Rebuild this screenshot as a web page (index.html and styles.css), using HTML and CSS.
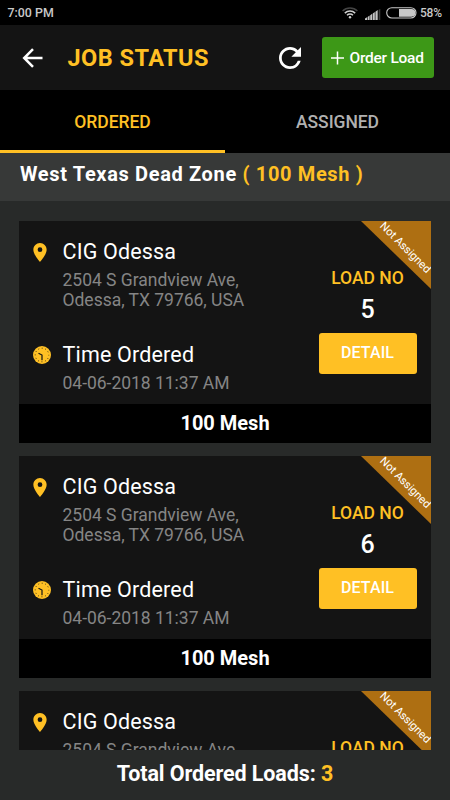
FILE: index.html
```html
<!DOCTYPE html>
<html lang="en">
<head>
<meta charset="utf-8">
<title>Job Status</title>
<link rel="stylesheet" href="styles.css">
</head>
<body>
<svg class="defs" width="0" height="0" aria-hidden="true">
  <symbol id="pin" viewBox="5 2 14 20"><path fill-rule="evenodd" d="M12 2C8.13 2 5 5.13 5 9c0 5.25 7 13 7 13s7-7.75 7-13c0-3.87-3.13-7-7-7zm0 9.5a2.5 2.5 0 1 1 0-5 2.5 2.5 0 0 1 0 5z"/></symbol>
  <symbol id="clock" viewBox="0 0 18 18">
    <circle cx="9" cy="9" r="9"/>
    <circle cx="9" cy="9" r="6.8" fill="none" stroke="#141414" stroke-width=".9" stroke-dasharray=".9 2.66" stroke-dashoffset=".45"/>
    <path d="M5.500 7.200 9 9v5.200" fill="none" stroke="#141414" stroke-width="1.200"/>
  </symbol>
</svg>
<div class="app">
  <div class="statusbar">
    <span class="time">7:00 PM</span>
    <svg class="wifi" width="16" height="12" viewBox="0 0 16 12" fill="none" stroke="#d0d0d0" stroke-width="1.5"><path d="M.6 4a10.6 10.6 0 0 1 14.8 0" stroke="#444"/><path d="M2.8 6.1a7.5 7.5 0 0 1 10.4 0M5 8.3a4.3 4.3 0 0 1 6 0"/><circle cx="8" cy="10.3" r="1.2" fill="#d0d0d0" stroke="none"/></svg>
    <svg class="signal" width="16" height="11" viewBox="0 0 16 11" fill="#c4c4c4"><path d="M0 11V9.500L2 8.300V11zM2.600 11V8L4.600 6.600V11zM5.200 11V6.200L7.200 4.800V11zM7.800 11V4.500L9.800 3.100V11zM10.400 11V2.700L12.700 1V11z"/><path d="M13.600 11V.7L15.300 0V11z" fill="#3b3b3b"/></svg>
    <svg class="battery" width="31" height="12" viewBox="0 0 31 12"><rect x=".7" y=".7" width="29.300" height="10.300" rx="5.150" fill="none" stroke="#c8c8c8" stroke-width="1.100"/><path d="M13 2h12.500a3.800 3.800 0 0 1 0 7.700H13z" fill="#c8c8c8"/></svg>
    <span class="percent">58%</span>
  </div>
  <header class="header">
    <svg class="back" width="21" height="20" viewBox="0 0 21 20" fill="none" stroke="#fff" stroke-width="2.500"><path d="M20.500 10H2.500M11 1.200 2.200 10l8.800 8.800"/></svg>
    <h1 class="title">JOB STATUS</h1>
    <svg class="refresh" width="22" height="22" viewBox="4 4 16 16" fill="#fff"><path d="M17.650 6.350A7.958 7.958 0 0 0 12 4c-4.420 0-7.990 3.580-7.990 8s3.570 8 7.990 8c3.730 0 6.840-2.550 7.730-6h-2.080A5.990 5.990 0 0 1 12 18c-3.310 0-6-2.690-6-6s2.690-6 6-6c1.660 0 3.140.69 4.220 1.780L13 11h7V4l-2.350 2.350z"/></svg>
    <button class="order"><svg width="13" height="14" viewBox="0 0 13 14" stroke="#fff" stroke-width="1.500"><path d="M0 7h13M6.500.5v13"/></svg><span>Order Load</span></button>
  </header>
  <nav class="tabs"><div class="tab active"><span>ORDERED</span></div><div class="tab"><span>ASSIGNED</span></div></nav>
  <div class="zone"><span>West Texas Dead Zone <b>( 100 Mesh )</b></span></div>
  <main class="list">
    <section class="card">
      <div class="body">
        <div class="info">
          <svg class="pin"><use href="#pin"/></svg><div class="name">CIG Odessa</div>
          <div class="address">2504 S Grandview Ave,<br>Odessa, TX 79766, USA</div>
          <svg class="clock"><use href="#clock"/></svg><div class="when">Time Ordered</div>
          <div class="date">04-06-2018 11:37 AM</div>
        </div>
        <div class="load"><div class="label">LOAD NO</div><div class="number">5</div><button class="detail">DETAIL</button></div>
        <div class="ribbon"><span>Not Assigned</span></div>
      </div>
      <div class="mesh">100 Mesh</div>
    </section>
    <section class="card">
      <div class="body">
        <div class="info">
          <svg class="pin"><use href="#pin"/></svg><div class="name">CIG Odessa</div>
          <div class="address">2504 S Grandview Ave,<br>Odessa, TX 79766, USA</div>
          <svg class="clock"><use href="#clock"/></svg><div class="when">Time Ordered</div>
          <div class="date">04-06-2018 11:37 AM</div>
        </div>
        <div class="load"><div class="label">LOAD NO</div><div class="number">6</div><button class="detail">DETAIL</button></div>
        <div class="ribbon"><span>Not Assigned</span></div>
      </div>
      <div class="mesh">100 Mesh</div>
    </section>
    <section class="card last">
      <div class="body">
        <div class="info">
          <svg class="pin"><use href="#pin"/></svg><div class="name">CIG Odessa</div>
          <div class="address">2504 S Grandview Ave,</div>
        </div>
        <div class="load"><div class="label">LOAD NO</div></div>
        <div class="ribbon"><span>Not Assigned</span></div>
      </div>
    </section>
  </main>
  <footer class="total"><span>Total Ordered Loads: <b>3</b></span></footer>
</div>
</body>
</html>
```
FILE: styles.css
```css
* { box-sizing: border-box; }
body { margin: 0; background: #282a29; font-family: Roboto, sans-serif; color: #fff; }
svg { display: block; flex: none; }
.defs { position: absolute; }
button { border: 0; padding: 0; margin: 0; font: inherit; color: #fff; white-space: nowrap; }
.app { display: flex; flex-direction: column; width: 450px; height: 800px; overflow: hidden; white-space: nowrap; }

.statusbar { display: flex; align-items: center; height: 25px; background: #000; padding: 0 7px 0 7.5px; font-size: 12.4px; font-weight: 500; color: #c9c9c9; }
.time { flex: 1; }
.signal { margin: 3px 5px 0 7px; }
.battery { margin-right: 3px; }
.percent { width: 23px; font-size: 12px; letter-spacing: -.2px; }

.header { display: flex; align-items: center; height: 65px; background: #141414; padding: 0 16px 0 22px; }
.title { flex: 1; margin: 0 0 0 24.5px; font-size: 23.5px; line-height: 28px; font-weight: 700; letter-spacing: .45px; color: #ffc024; }
.refresh { margin-right: 21px; }
.order { display: flex; align-items: center; width: 112px; height: 41px; padding-left: 8.5px; gap: 6px; border-radius: 3px; background: #3d9817; font-size: 15.5px; font-weight: 500; letter-spacing: -.25px; }

.tabs { display: flex; height: 63px; background: #000; }
.tab { flex: 1; display: flex; align-items: center; justify-content: center; padding-top: 3px; border-bottom: 3px solid transparent; font-size: 17.5px; font-weight: 500; letter-spacing: -.05px; color: #b0b0b0; }
.tab.active { color: #ffc024; border-color: #ffc024; }

.zone { height: 48px; padding-left: 20px; background: #373938; font-size: 20px; line-height: 43px; font-weight: 700; letter-spacing: .65px; }
.zone b, .total b { color: #ffc024; font-weight: inherit; }

.list { display: flex; flex-direction: column; gap: 13px; height: 549px; padding: 20px 19px 0; overflow: hidden; }
.card { flex: none; width: 412px; }
.body { position: relative; display: flex; height: 183px; background: #141414; overflow: hidden; }
.info { display: grid; grid-template-columns: 29.5px 242.5px; grid-template-rows: 25px 40px auto auto; align-content: start; padding: 18px 0 0 14px; }
.pin { width: 14px; height: 19px; margin-top: 4px; fill: #ffc024; }
.clock { width: 18px; height: 18px; fill: #ffc024; }
.name, .when { font-size: 21.5px; line-height: 25px; letter-spacing: .17px; }
.address, .date { grid-column: 2; font-size: 17.5px; color: #858585; letter-spacing: -.02px; }
.address { line-height: 20px; margin-top: 6px; }
.info .when { margin-top: 38px; }
.info .clock { margin-top: 42px; }
.date { line-height: 24px; margin-top: 4px; }
.load { display: flex; flex-direction: column; align-items: center; width: 98px; margin-left: 13.5px; padding-top: 46px; }
.label { font-size: 17.5px; line-height: 22px; font-weight: 500; color: #ffc024; }
.number { margin-top: 6px; font-size: 25px; line-height: 30px; font-weight: 500; }
.detail { width: 98px; height: 41px; margin-top: 8px; padding-bottom: 3px; border-radius: 3px; background: #ffc024; font-size: 16px; font-weight: 500; letter-spacing: .1px; }
.ribbon { position: absolute; top: 0; right: 0; width: 70px; height: 68px; background: #ae6f12; clip-path: polygon(0 0, 100% 0, 100% 100%); }
.ribbon span { position: absolute; left: 44px; top: 27px; font-size: 11.3px; line-height: 12px; letter-spacing: -.1px; transform: translate(-50%, -50%) rotate(45deg); }
.mesh { height: 39px; background: #000; text-align: center; font-size: 20px; line-height: 39px; font-weight: 700; }
.last .body { height: 59px; }
.total { height: 50px; text-align: center; font-size: 21.5px; line-height: 48px; font-weight: 700; letter-spacing: -.1px; }
```
